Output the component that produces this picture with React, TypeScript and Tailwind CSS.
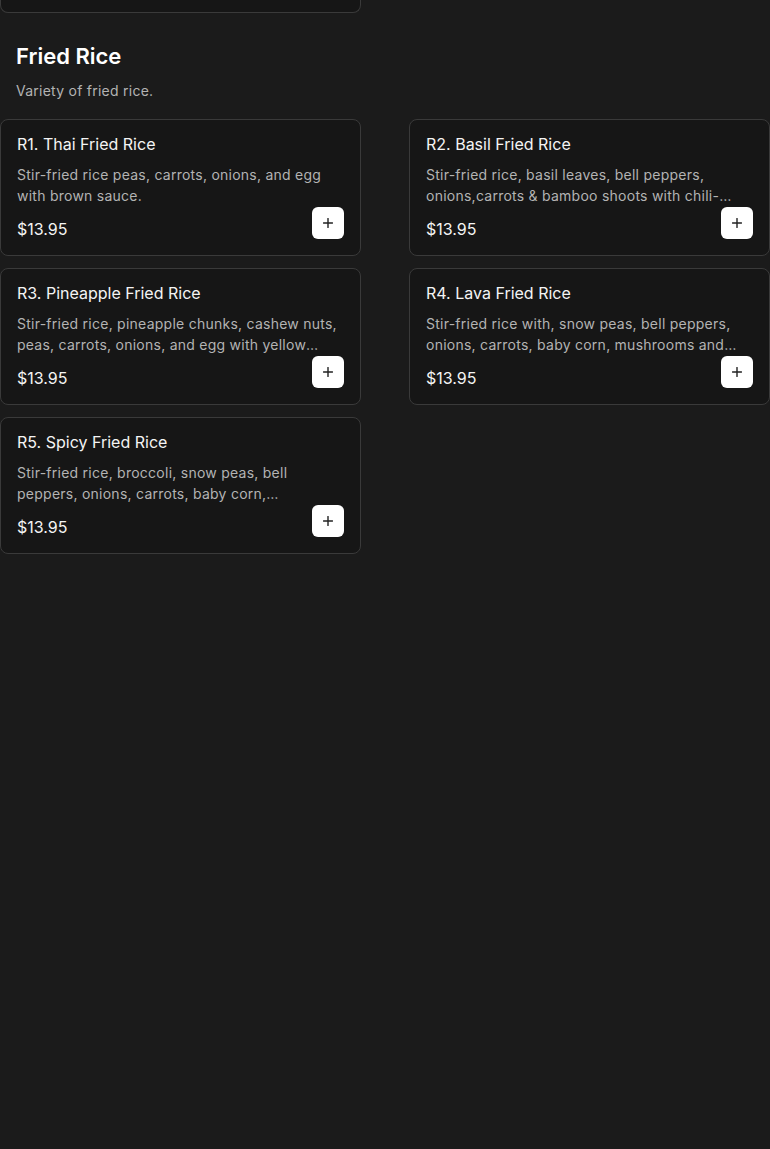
const items = [
  {
    name: 'R1. Thai Fried Rice',
    desc: 'Stir-fried rice peas, carrots, onions, and egg with brown sauce.',
    price: '$13.95',
  },
  {
    name: 'R2. Basil Fried Rice',
    desc: 'Stir-fried rice, basil leaves, bell peppers, onions,carrots & bamboo shoots with chili-garlic sauce.',
    price: '$13.95',
  },
  {
    name: 'R3. Pineapple Fried Rice',
    desc: 'Stir-fried rice, pineapple chunks, cashew nuts, peas, carrots, onions, and egg with yellow curry powder.',
    price: '$13.95',
  },
  {
    name: 'R4. Lava Fried Rice',
    desc: 'Stir-fried rice with, snow peas, bell peppers, onions, carrots, baby corn, mushrooms and chili paste.',
    price: '$13.95',
  },
  {
    name: 'R5. Spicy Fried Rice',
    desc: 'Stir-fried rice, broccoli, snow peas, bell peppers, onions, carrots, baby corn, mushrooms with spicy sauce.',
    price: '$13.95',
  },
];

function PlusIcon() {
  return (
    <svg width="10" height="10" viewBox="0 0 10 10" fill="none">
      <path d="M5 0.5v9M0.5 5h9" stroke="#222" strokeWidth="1.4" strokeLinecap="round" />
    </svg>
  );
}

function MenuCard({ name, desc, price }: { name: string; desc: string; price: string }) {
  return (
    <div className="rounded-lg border border-[#3a3a3a] bg-[#161616] p-4">
      <h3 className="text-base leading-4 text-[#f4f4f4]">{name}</h3>
      <p className="mt-3 line-clamp-2 text-sm leading-[21px] tracking-[0.25px] text-[#b3b3b3]">
        {desc}
      </p>
      <div className="mt-px flex items-end justify-between">
        <span className="text-base leading-5 text-[#f4f4f4]">{price}</span>
        <button
          type="button"
          className="flex h-8 w-8 items-center justify-center rounded-md bg-white"
        >
          <PlusIcon />
        </button>
      </div>
    </div>
  );
}

export default function App() {
  return (
    <div className="min-h-[1149px] bg-[#1b1b1b] font-['Inter',sans-serif]">
      {/* tail of the previous section's card */}
      <div className="grid grid-cols-2 gap-x-12">
        <div className="h-[13px] rounded-b-lg border border-t-0 border-[#3a3a3a] bg-[#161616]" />
      </div>

      <section className="mt-[27px]">
        <h2 className="px-4 text-[22px] leading-8 font-semibold text-white">Fried Rice</h2>
        <p className="mt-[9px] px-4 text-sm leading-5 tracking-[0.25px] text-[#b3b3b3]">
          Variety of fried rice.
        </p>

        <div className="mt-[18px] grid grid-cols-2 gap-x-12 gap-y-3">
          {items.map((item) => (
            <MenuCard key={item.name} {...item} />
          ))}
        </div>
      </section>
    </div>
  );
}
